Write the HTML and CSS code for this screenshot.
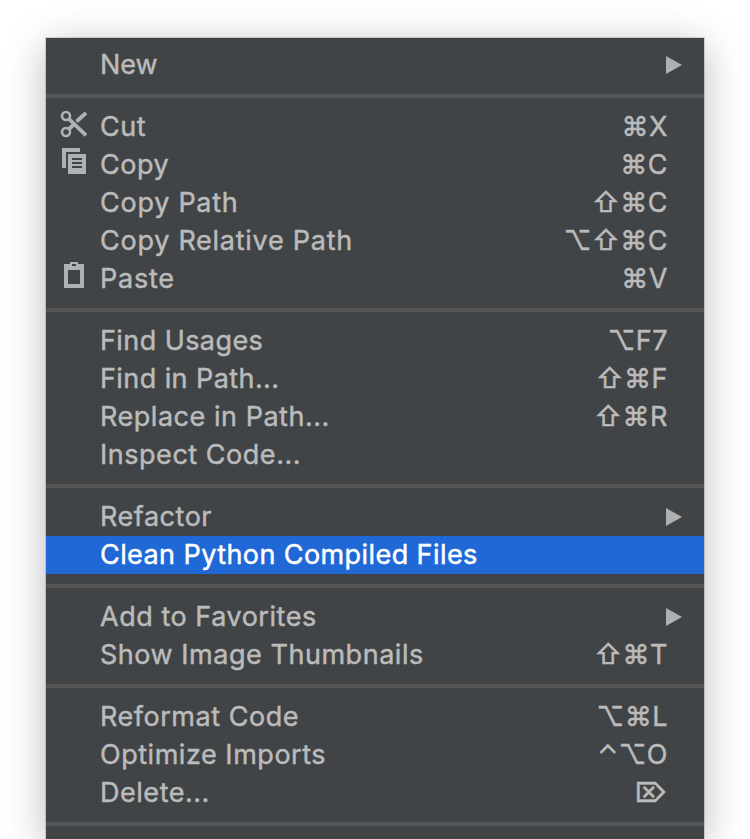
FILE: index.html
```html
<!DOCTYPE html>
<html lang="en">
<head>
<meta charset="utf-8">
<title>Context menu</title>
<link rel="stylesheet" href="styles.css">
</head>
<body>
<nav class="menu">
  <div class="group">
    <div class="item"><span class="icon"></span><span class="label narrow">New</span><svg class="arrow" viewBox="0 0 16 18"><path d="M0 0L16 9L0 18Z"/></svg></div>
  </div>
  <div class="group">
    <div class="item"><span class="icon"><svg viewBox="0 0 32 38"><g fill="none" stroke="#afb1b3"><circle cx="6" cy="8" r="4" stroke-width="2.6"/><circle cx="6" cy="24" r="4" stroke-width="2.6"/><path d="M9 11L26 27.4M9 21L14 16.4M16.5 13.5L26 4.8" stroke-width="3.8"/></g></svg></span><span class="label">Cut</span><span class="keys">⌘X</span></div>
    <div class="item"><span class="icon"><svg viewBox="0 0 32 38"><path fill="#afb1b3" fill-rule="evenodd" d="M2 2H20V6H6V22H2ZM8 8H26V28H8ZM12 12V14H22V12ZM12 16V18H22V16ZM12 20V22H22V20Z"/></svg></span><span class="label">Copy</span><span class="keys">⌘C</span></div>
    <div class="item"><span class="icon"></span><span class="label wide">Copy Path</span><span class="keys">⇧⌘C</span></div>
    <div class="item"><span class="icon"></span><span class="label wide">Copy Relative Path</span><span class="keys">⌥⇧⌘C</span></div>
    <div class="item"><span class="icon"><svg viewBox="0 0 32 38"><path fill="#afb1b3" fill-rule="evenodd" d="M4 4H10V2H18V4H24V28H4ZM8 10V24H20V10ZM12 4V6H16V4Z"/></svg></span><span class="label wide">Paste</span><span class="keys">⌘V</span></div>
  </div>
  <div class="group">
    <div class="item"><span class="icon"></span><span class="label snug">Find Usages</span><span class="keys">⌥F7</span></div>
    <div class="item"><span class="icon"></span><span class="label snug">Find in Path...</span><span class="keys">⇧⌘F</span></div>
    <div class="item"><span class="icon"></span><span class="label">Replace in Path...</span><span class="keys">⇧⌘R</span></div>
    <div class="item"><span class="icon"></span><span class="label">Inspect Code...</span></div>
  </div>
  <div class="group">
    <div class="item"><span class="icon"></span><span class="label">Refactor</span><svg class="arrow" viewBox="0 0 16 18"><path d="M0 0L16 9L0 18Z"/></svg></div>
    <div class="item selected"><span class="icon"></span><span class="label snug">Clean Python Compiled Files</span></div>
  </div>
  <div class="group">
    <div class="item"><span class="icon"></span><span class="label">Add to Favorites</span><svg class="arrow" viewBox="0 0 16 18"><path d="M0 0L16 9L0 18Z"/></svg></div>
    <div class="item"><span class="icon"></span><span class="label">Show Image Thumbnails</span><span class="keys">⇧⌘T</span></div>
  </div>
  <div class="group">
    <div class="item"><span class="icon"></span><span class="label">Reformat Code</span><span class="keys">⌥⌘L</span></div>
    <div class="item"><span class="icon"></span><span class="label">Optimize Imports</span><span class="keys">⌃⌥O</span></div>
    <div class="item"><span class="icon"></span><span class="label">Delete...</span><span class="keys">⌦</span></div>
  </div>
  <div class="group"></div>
</nav>
</body>
</html>
```
FILE: styles.css
```css
* { box-sizing: border-box; }
html, body { margin: 0; height: 839px; overflow: hidden; background: #fff; }
body { padding: 38px 46px 0; font-family: Inter, "Liberation Sans", sans-serif; }
.menu {
  height: 801px;
  padding-top: 8px;
  background: #414446;
  box-shadow: 0 0 0 1px rgba(0,0,0,.14), 0 8px 38px rgba(0,0,0,.28);
}
.group + .group { margin-top: 10px; border-top: 4px solid #555; padding-top: 10px; }
.item { display: flex; height: 38px; padding: 0 22px 0 14px; color: #bbb; font-size: 27px; line-height: 38px; white-space: nowrap; -webkit-text-stroke: .45px currentColor; }
.icon { width: 40px; flex: none; }
.icon svg { display: block; width: 32px; height: 38px; }
.label { flex: 1; letter-spacing: .53px; }
.label.narrow { letter-spacing: 0; }
.label.snug { letter-spacing: .42px; }
.label.wide { letter-spacing: .74px; }
.keys { margin-right: 14px; letter-spacing: .5px; }
.arrow { width: 16px; height: 18px; margin-top: 10px; fill: #afafaf; }
.selected { background: #2068d5; color: #fff; }
```
